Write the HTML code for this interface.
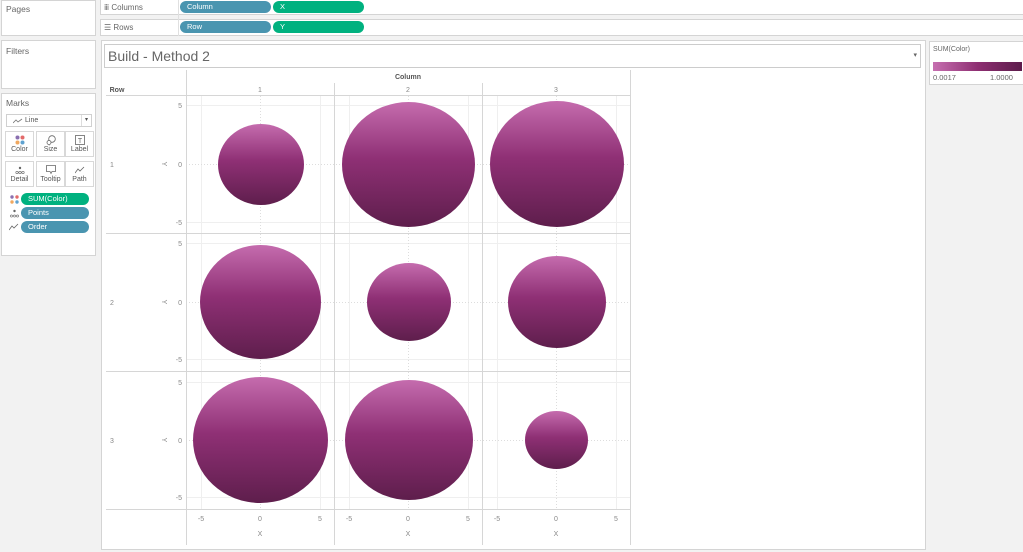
<!DOCTYPE html>
<html><head><meta charset="utf-8"><style>
*{margin:0;padding:0;box-sizing:border-box}
body{width:1023px;height:552px;background:#f2f2f2;font-family:"Liberation Sans",sans-serif;position:relative;overflow:hidden;color:#555}
.p{position:absolute;background:#fff;border:1px solid #d4d4d4}
.t{position:absolute;font-size:8px;color:#666}
.pill{position:absolute;height:12px;border-radius:6px;color:#fff;font-size:7.5px;line-height:12px;padding-left:7px}
.b{background:#4a95b0}.g{background:#00b17f}
.mb{position:absolute;width:29px;height:26px;border:1px solid #d8d8d8;background:#fff;font-size:7px;text-align:center;color:#555}
.mb svg{display:block;margin:3px auto 1px}
</style></head><body>
<div class="p" style="left:1px;top:0;width:95px;height:36px"></div><div class="t" style="left:6px;top:4px;font-size:8.5px">Pages</div>
<div class="p" style="left:1px;top:40px;width:95px;height:49px"></div><div class="t" style="left:6px;top:46px;font-size:8.5px">Filters</div>
<div class="p" style="left:1px;top:93px;width:95px;height:163px"></div><div class="t" style="left:6px;top:98px;font-size:8.5px">Marks</div>
<div style="position:absolute;left:6px;top:114px;width:86px;height:13px;border:1px solid #d0d0d0;background:#fff;font-size:7px;line-height:11px;padding-left:18px;color:#555">Line<svg style="position:absolute;left:6px;top:3px" width="10" height="6"><path d="M0 5 L3 2 L5 4 L9 1" stroke="#777" fill="none" stroke-width="0.8"/></svg><span style="position:absolute;right:0;top:0;width:10px;height:11px;border-left:1px solid #ddd;text-align:center;font-size:6px">▾</span></div>
<div class="mb" style="left:5px;top:131px"><svg width="10" height="10"><circle cx="2.5" cy="2.5" r="2" fill="#8a6fb0"/><circle cx="7.5" cy="2.5" r="2" fill="#e36a6a"/><circle cx="2.5" cy="7.5" r="2" fill="#f0a860"/><circle cx="7.5" cy="7.5" r="2" fill="#5fa2d0"/></svg>Color</div>
<div class="mb" style="left:36px;top:131px"><svg width="10" height="10"><circle cx="6" cy="4" r="3.3" stroke="#666" fill="none" stroke-width="0.8"/><circle cx="3" cy="7.5" r="2" stroke="#666" fill="#fff" stroke-width="0.8"/></svg>Size</div>
<div class="mb" style="left:65px;top:131px"><svg width="10" height="10"><rect x="0.5" y="0.5" width="9" height="9" stroke="#666" fill="none" stroke-width="0.8"/><text x="5" y="8" font-size="7" text-anchor="middle" fill="#666">T</text></svg>Label</div>
<div class="mb" style="left:5px;top:161px"><svg width="10" height="10"><circle cx="5" cy="3" r="1.2" fill="#666"/><circle cx="2" cy="7.5" r="1.2" fill="none" stroke="#666" stroke-width=".6"/><circle cx="5" cy="7.5" r="1.2" fill="none" stroke="#666" stroke-width=".6"/><circle cx="8" cy="7.5" r="1.2" fill="none" stroke="#666" stroke-width=".6"/></svg>Detail</div>
<div class="mb" style="left:36px;top:161px"><svg width="10" height="10"><path d="M0.5 0.5H9.5V6.5H6L5 8.5L4 6.5H0.5Z" stroke="#666" fill="none" stroke-width="0.8"/></svg>Tooltip</div>
<div class="mb" style="left:65px;top:161px"><svg width="10" height="10"><path d="M0 8 L3 4 L5 6 L9 2" stroke="#666" fill="none" stroke-width="0.8"/></svg>Path</div>
<svg style="position:absolute;left:10px;top:195px" width="9" height="9"><circle cx="2" cy="2" r="1.7" fill="#8a6fb0"/><circle cx="7" cy="2" r="1.7" fill="#e36a6a"/><circle cx="2" cy="7" r="1.7" fill="#f0a860"/><circle cx="7" cy="7" r="1.7" fill="#5fa2d0"/></svg>
<div class="pill g" style="left:21px;top:193px;width:68px">SUM(Color)</div>
<svg style="position:absolute;left:10px;top:209px" width="9" height="9"><circle cx="4.5" cy="2" r="1.2" fill="#666"/><circle cx="1.5" cy="7" r="1.1" fill="none" stroke="#666" stroke-width=".6"/><circle cx="4.5" cy="7" r="1.1" fill="none" stroke="#666" stroke-width=".6"/><circle cx="7.5" cy="7" r="1.1" fill="none" stroke="#666" stroke-width=".6"/></svg>
<div class="pill b" style="left:21px;top:207px;width:68px">Points</div>
<svg style="position:absolute;left:9px;top:223px" width="10" height="8"><path d="M0 7 L3 3 L5 5 L9 1" stroke="#666" fill="none" stroke-width="0.8"/></svg>
<div class="pill b" style="left:21px;top:221px;width:68px">Order</div>
<div class="p" style="left:100px;top:-1px;width:930px;height:16px"></div>
<div class="p" style="left:100px;top:19px;width:930px;height:17px"></div>
<div style="position:absolute;left:178px;top:0;width:1px;height:36px;background:#e0e0e0"></div>
<div class="t" style="left:104px;top:3px">ⅲ Columns</div>
<div class="t" style="left:104px;top:23px">☰ Rows</div>
<div class="pill b" style="left:180px;top:1px;width:91px">Column</div>
<div class="pill g" style="left:273px;top:1px;width:91px">X</div>
<div class="pill b" style="left:180px;top:21px;width:91px">Row</div>
<div class="pill g" style="left:273px;top:21px;width:91px">Y</div>
<div class="p" style="left:101px;top:40px;width:825px;height:510px"></div>
<div style="position:absolute;left:104px;top:44px;width:817px;height:24px;border:1px solid #ccc;font-size:14px;line-height:22px;padding-left:3px;color:#666">Build - Method 2<span style="position:absolute;right:3px;top:0;font-size:7px">▾</span></div>
<div class="p" style="left:929px;top:41px;width:100px;height:44px"></div>
<div class="t" style="left:933px;top:46px;font-size:7px">SUM(Color)</div>
<div style="position:absolute;left:933px;top:62px;width:89px;height:9px;background:linear-gradient(90deg,#c66fb0,#8e2f72 50%,#5c1c4b)"></div>
<div class="t" style="left:933px;top:73px;font-size:7.5px">0.0017</div>
<div class="t" style="left:990px;top:73px;font-size:7.5px">1.0000</div>
<svg style="position:absolute;left:0;top:0" width="1023" height="552" font-family="Liberation Sans, sans-serif">
<defs><linearGradient id="g" x1="0" y1="0" x2="0" y2="1"><stop offset="0" stop-color="#c56cae"/><stop offset=".45" stop-color="#8f3075"/><stop offset="1" stop-color="#5e1e4c"/></linearGradient></defs>
<g stroke="#efefef" stroke-width="1">
<line x1="186" y1="105.5" x2="630" y2="105.5"/><line x1="186" y1="222.5" x2="630" y2="222.5"/>
<line x1="186" y1="243.5" x2="630" y2="243.5"/><line x1="186" y1="359.5" x2="630" y2="359.5"/>
<line x1="186" y1="382.5" x2="630" y2="382.5"/><line x1="186" y1="497.5" x2="630" y2="497.5"/>
<line x1="201.5" y1="96" x2="201.5" y2="509"/><line x1="320.5" y1="96" x2="320.5" y2="509"/>
<line x1="349.5" y1="96" x2="349.5" y2="509"/><line x1="468.5" y1="96" x2="468.5" y2="509"/>
<line x1="497.5" y1="96" x2="497.5" y2="509"/><line x1="616.5" y1="96" x2="616.5" y2="509"/>
</g>
<g stroke="#ddd" stroke-dasharray="1,2"><line x1="186" y1="164.5" x2="630" y2="164.5"/><line x1="186" y1="302.5" x2="630" y2="302.5"/><line x1="186" y1="440.5" x2="630" y2="440.5"/>
<line x1="260.5" y1="96" x2="260.5" y2="509"/><line x1="408.5" y1="96" x2="408.5" y2="509"/><line x1="556.5" y1="96" x2="556.5" y2="509"/></g>
<g stroke="#d6d6d6"><line x1="186.5" y1="70" x2="186.5" y2="545"/><line x1="334.5" y1="83" x2="334.5" y2="545"/><line x1="482.5" y1="83" x2="482.5" y2="545"/><line x1="630.5" y1="70" x2="630.5" y2="545"/>
<line x1="106" y1="95.5" x2="630" y2="95.5"/><line x1="106" y1="233.5" x2="630" y2="233.5"/><line x1="106" y1="371.5" x2="630" y2="371.5"/><line x1="106" y1="509.5" x2="630" y2="509.5"/></g>
<g fill="url(#g)">
<ellipse cx="261" cy="164.5" rx="43" ry="40.5"/><ellipse cx="408.5" cy="164.5" rx="66.5" ry="62.5"/><ellipse cx="557" cy="164" rx="67" ry="63"/>
<ellipse cx="260.5" cy="302" rx="60.5" ry="57"/><ellipse cx="409" cy="302" rx="42" ry="39"/><ellipse cx="557" cy="302" rx="49" ry="46"/>
<ellipse cx="260.5" cy="440" rx="67.5" ry="63"/><ellipse cx="409" cy="440" rx="64" ry="60"/><ellipse cx="556.5" cy="440" rx="31.5" ry="29"/>
</g>
<g font-size="7" fill="#888" text-anchor="middle">
<text x="408" y="79" fill="#555" font-weight="bold">Column</text>
<text x="260" y="92">1</text><text x="408" y="92">2</text><text x="556" y="92">3</text>
<text x="117" y="92" fill="#555" font-weight="bold">Row</text>
<text x="112" y="167">1</text><text x="112" y="305">2</text><text x="112" y="443">3</text>
<g text-anchor="end"><text x="182" y="108">5</text><text x="182" y="167">0</text><text x="182" y="225">-5</text>
<text x="182" y="246">5</text><text x="182" y="305">0</text><text x="182" y="362">-5</text>
<text x="182" y="385">5</text><text x="182" y="443">0</text><text x="182" y="500">-5</text></g>
<text transform="translate(164,164) rotate(90)" y="2">Y</text><text transform="translate(164,302) rotate(90)" y="2">Y</text><text transform="translate(164,440) rotate(90)" y="2">Y</text>
<text x="201" y="521">-5</text><text x="260" y="521">0</text><text x="320" y="521">5</text>
<text x="349" y="521">-5</text><text x="408" y="521">0</text><text x="468" y="521">5</text>
<text x="497" y="521">-5</text><text x="556" y="521">0</text><text x="616" y="521">5</text>
<text x="260" y="536">X</text><text x="408" y="536">X</text><text x="556" y="536">X</text>
</g>
</svg>
</body></html>
